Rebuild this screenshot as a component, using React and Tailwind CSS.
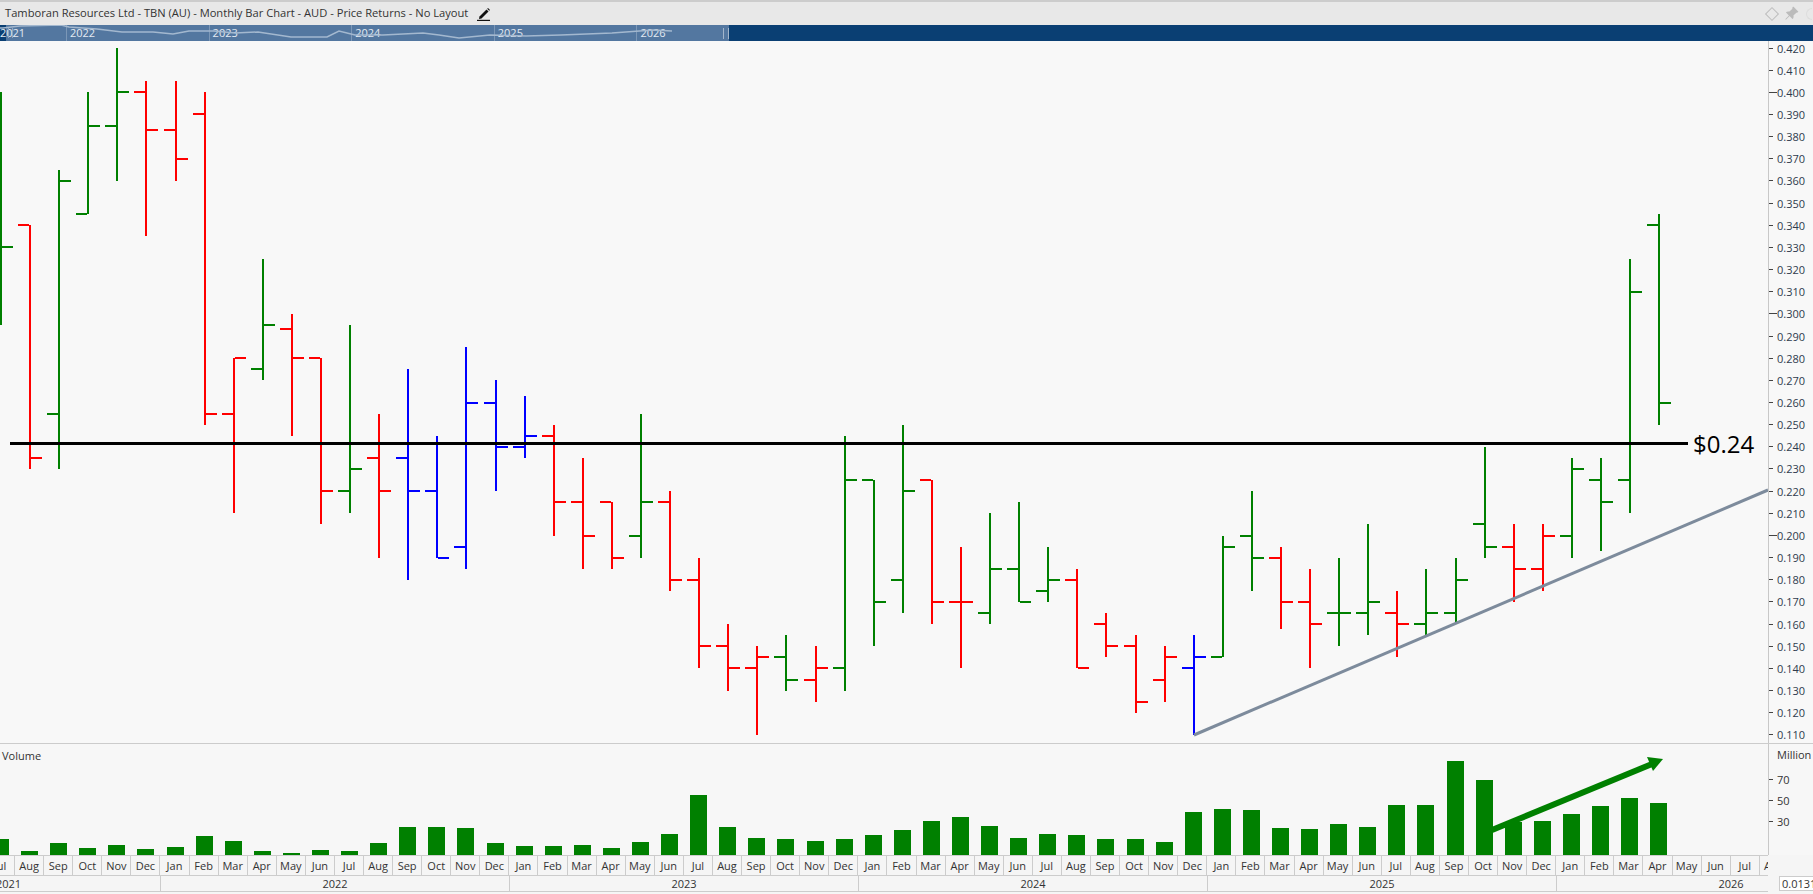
import React from "react";
import { BsPinAngleFill } from "react-icons/bs";

const UP = "#008000";
const DOWN = "#ff0000";
const NEUTRAL = "#0000ff";

// [colour, open, high, low, close], one per month from Jul 2021
const bars = [
  [UP, 0.33, 0.4, 0.295, 0.33],
  [DOWN, 0.34, 0.34, 0.23, 0.235],
  [UP, 0.255, 0.365, 0.23, 0.36],
  [UP, 0.345, 0.4, 0.345, 0.385],
  [UP, 0.385, 0.42, 0.36, 0.4],
  [DOWN, 0.4, 0.405, 0.335, 0.383],
  [DOWN, 0.383, 0.405, 0.36, 0.37],
  [DOWN, 0.39, 0.4, 0.25, 0.255],
  [DOWN, 0.255, 0.28, 0.21, 0.28],
  [UP, 0.275, 0.325, 0.27, 0.295],
  [DOWN, 0.293, 0.3, 0.245, 0.28],
  [DOWN, 0.28, 0.28, 0.205, 0.22],
  [UP, 0.22, 0.295, 0.21, 0.23],
  [DOWN, 0.235, 0.255, 0.19, 0.22],
  [NEUTRAL, 0.235, 0.275, 0.18, 0.22],
  [NEUTRAL, 0.22, 0.245, 0.19, 0.19],
  [NEUTRAL, 0.195, 0.285, 0.185, 0.26],
  [NEUTRAL, 0.26, 0.27, 0.22, 0.24],
  [NEUTRAL, 0.24, 0.263, 0.235, 0.245],
  [DOWN, 0.245, 0.25, 0.2, 0.215],
  [DOWN, 0.215, 0.235, 0.185, 0.2],
  [DOWN, 0.215, 0.215, 0.185, 0.19],
  [UP, 0.2, 0.255, 0.19, 0.215],
  [DOWN, 0.215, 0.22, 0.175, 0.18],
  [DOWN, 0.18, 0.19, 0.14, 0.15],
  [DOWN, 0.15, 0.16, 0.13, 0.14],
  [DOWN, 0.14, 0.15, 0.11, 0.145],
  [UP, 0.145, 0.155, 0.13, 0.135],
  [DOWN, 0.135, 0.15, 0.125, 0.14],
  [UP, 0.14, 0.245, 0.13, 0.225],
  [UP, 0.225, 0.225, 0.15, 0.17],
  [UP, 0.18, 0.25, 0.165, 0.22],
  [DOWN, 0.225, 0.225, 0.16, 0.17],
  [DOWN, 0.17, 0.195, 0.14, 0.17],
  [UP, 0.165, 0.21, 0.16, 0.185],
  [UP, 0.185, 0.215, 0.17, 0.17],
  [UP, 0.175, 0.195, 0.17, 0.18],
  [DOWN, 0.18, 0.185, 0.14, 0.14],
  [DOWN, 0.16, 0.165, 0.145, 0.15],
  [DOWN, 0.15, 0.155, 0.12, 0.125],
  [DOWN, 0.135, 0.15, 0.125, 0.145],
  [NEUTRAL, 0.14, 0.155, 0.11, 0.145],
  [UP, 0.145, 0.2, 0.145, 0.195],
  [UP, 0.2, 0.22, 0.175, 0.19],
  [DOWN, 0.19, 0.195, 0.158, 0.17],
  [DOWN, 0.17, 0.185, 0.14, 0.16],
  [UP, 0.165, 0.19, 0.15, 0.165],
  [UP, 0.165, 0.205, 0.155, 0.17],
  [DOWN, 0.165, 0.175, 0.145, 0.16],
  [UP, 0.16, 0.185, 0.155, 0.165],
  [UP, 0.165, 0.19, 0.16, 0.18],
  [UP, 0.205, 0.24, 0.19, 0.195],
  [DOWN, 0.195, 0.205, 0.17, 0.185],
  [DOWN, 0.185, 0.205, 0.175, 0.2],
  [UP, 0.2, 0.235, 0.19, 0.23],
  [UP, 0.225, 0.235, 0.193, 0.215],
  [UP, 0.225, 0.325, 0.21, 0.31],
  [UP, 0.34, 0.345, 0.25, 0.26],
];

const volumes = [
  16, 4, 12, 7, 10, 6, 8, 19, 14, 4, 2, 5, 4, 12, 28, 28, 27, 12, 9, 9, 10, 7, 13, 21, 60, 28, 17, 16, 14, 16,
  20, 25, 34, 38, 29, 17, 21, 20, 16, 16, 13, 43, 46, 45, 27, 26, 31, 28, 50, 50, 94, 75, 33, 34, 41, 49, 57, 52,
];

const monthNames = ["Jan", "Feb", "Mar", "Apr", "May", "Jun", "Jul", "Aug", "Sep", "Oct", "Nov", "Dec"];
const months = Array.from({ length: 62 }, (_, i) => monthNames[(i + 6) % 12]);

const priceTicks = Array.from({ length: 32 }, (_, i) => 0.42 - i * 0.01);
const years = ["2022", "2023", "2024", "2025", "2026"];

const barX = (i) => Math.round(1 + i * 29.09) - 1;
const priceY = (p) => Math.round(48 + (0.42 - p) * 2216) - 41;

const navLine =
  "0,28 3,28 20,26 61,25 69,27 97,29 122,32 153,32 173,34 189,31 214,31 235,33 258,32 291,37 327,37 339,31 355,35 383,35 423,33 439,35 459,38 490,35 526,36 561,35 612,33 653,30 672,31";

function PriceBars() {
  return (
    <svg width="1768" height="702" className="block" shapeRendering="crispEdges">
      {bars.map(([color, open, high, low, close], i) => {
        const x = barX(i);
        return (
          <g key={i} fill={color}>
            <rect x={x} y={priceY(high)} width="2" height={priceY(low) - priceY(high)} />
            <rect x={x - 11} y={priceY(open) - 1} width="11" height="2" />
            <rect x={x + 2} y={priceY(close) - 1} width="11" height="2" />
          </g>
        );
      })}
      <line x1="1194" y1="694" x2="1768" y2="449" stroke="#7d8b9c" strokeWidth="3" shapeRendering="auto" />
      <rect x="10" y="401" width="1678" height="3" fill="#000" />
    </svg>
  );
}

function VolumeBars() {
  return (
    <svg width="1768" height="111" className="block">
      {volumes.map((v, i) => (
        <rect key={i} x={barX(i) - 8} y={111 - v} width="17" height={v} fill={UP} shapeRendering="crispEdges" />
      ))}
      <line x1="1492" y1="86" x2="1652" y2="20" stroke={UP} strokeWidth="6" />
      <polygon points="1647,13 1663,15 1653,27" fill={UP} />
    </svg>
  );
}

export default function App() {
  return (
    <div
      className="w-full h-screen overflow-hidden flex flex-col bg-[#f0f0f0] text-[#333] text-[11px]"
      style={{ fontFamily: '"Open Sans", "Noto Sans", sans-serif' }}
    >
      {/* title bar */}
      <div className="h-[25px] shrink-0 border-t-2 border-[#cccccc] bg-[#e8e8e8] flex items-center pl-[5px] pr-[1px]">
        <span className="text-[11.15px] whitespace-nowrap">
          Tamboran Resources Ltd - TBN (AU) - Monthly Bar Chart - AUD - Price Returns - No Layout
        </span>
        <svg width="14" height="14" viewBox="0 0 14 14" className="ml-[9px]">
          <path d="M2.5 9.5 L9.5 2.5 L11.5 4.5 L4.5 11.5 L2 12 Z" fill="#111" />
          <path d="M10.2 1.8 L11 1 L13 3 L12.2 3.8 Z" fill="#111" />
          <rect x="0" y="12.8" width="13" height="1.2" fill="#111" />
        </svg>
        <div className="ml-auto flex items-center gap-[7px]">
          <div className="w-[10px] h-[10px] rotate-45 border-[1.5px] border-[#bdbdbd]" />
          <BsPinAngleFill className="text-[#bbbbbb] w-[15px] h-[15px]" />
          <div className="w-[6px] h-[12px] rounded-l-full border-l border-y border-[#dddddd]" />
        </div>
      </div>

      {/* navigator */}
      <div className="h-[16px] shrink-0 bg-[#0a3f73]">
        <div className="relative w-[729px] h-full bg-[#5377a0] overflow-hidden">
          <div className="absolute left-0 top-0 w-[6px] h-full bg-[#0a3f73]" />
          <div className="relative flex text-[#e3eaf2] text-[11px] leading-[16px]">
            <div className="w-[66px] shrink-0">2021</div>
            {years.map((y) => (
              <div key={y} className="w-[142.6px] shrink-0 border-l border-[#7b97b7] pl-[3px]">
                {y}
              </div>
            ))}
          </div>
          <svg width="729" height="16" className="absolute left-0 top-0" viewBox="0 25 729 16">
            <polyline points={navLine} fill="none" stroke="#a3b8cf" strokeWidth="1.5" />
          </svg>
          <div className="absolute left-[8px] top-[3px] w-[5px] h-[10px] border-x border-[#8fa5bf]" />
          <div className="absolute right-0 top-[3px] w-[6px] h-[11px] border-x border-[#a3b6cc]" />
        </div>
      </div>

      {/* price pane */}
      <div className="h-[702px] shrink-0 bg-[#f8f8f8] flex">
        <div className="relative w-[1768px] shrink-0 overflow-hidden">
          <PriceBars />
          <div className="absolute left-[1693px] top-[385px] text-[24px] leading-[36px] text-black">$0.24</div>
        </div>
        <div className="flex-1 border-l border-[#c8c8c8] overflow-hidden">
          <div className="-mt-[4.08px]">
            {priceTicks.map((p, i) => (
              <div key={i} className="h-[22.16px] flex items-center">
                <div className="w-[8px] shrink-0">
                  <div className={i % 10 === 2 ? "w-[8px] h-px bg-[#444]" : "w-[4px] h-px bg-[#444]"} />
                </div>
                <span className="text-[11px] leading-none text-[#2f3b4d]">{p.toFixed(3)}</span>
              </div>
            ))}
          </div>
        </div>
      </div>

      {/* volume pane */}
      <div className="h-[112px] shrink-0 border-t border-[#cccccc] bg-[#f7f7f7] flex">
        <div className="relative w-[1768px] shrink-0">
          <VolumeBars />
          <div className="absolute left-[2px] top-[4px] text-[11px] leading-[16px]">Volume</div>
        </div>
        <div className="flex-1 border-l border-[#c8c8c8] pt-[3px] overflow-hidden">
          <div className="pl-[8px] h-[16px] leading-[16px] whitespace-nowrap">Million</div>
          <div className="mt-[6px]">
            {["70", "50", "30"].map((v) => (
              <div key={v} className="h-[21px] flex items-center">
                <div className="w-[8px] shrink-0">
                  <div className="w-[4px] h-px bg-[#444]" />
                </div>
                <span className="leading-none">{v}</span>
              </div>
            ))}
          </div>
        </div>
      </div>

      {/* time axis */}
      <div className="h-[39px] shrink-0 flex bg-[#f5f5f5]">
        <div className="w-[1768px] shrink-0 overflow-hidden">
          <div className="h-[20px] flex border-t border-[#cccccc] -ml-[14px]">
            {months.map((m, i) => (
              <div
                key={i}
                className="w-[29.09px] shrink-0 border-r border-[#cccccc] text-center leading-[19px] text-[11px] overflow-hidden"
              >
                {m}
              </div>
            ))}
          </div>
          <div className="h-[17px] flex border-y border-[#cccccc] -ml-[4px] leading-[15px]">
            <div className="w-[165px] shrink-0 border-r border-[#cccccc]">2021</div>
            {years.map((y) => (
              <div key={y} className="w-[349px] shrink-0 border-r border-[#cccccc] text-center">
                {y}
              </div>
            ))}
          </div>
        </div>
        <div className="flex-1 pl-[11px] pt-[21px] overflow-hidden">
          <div className="h-[15px] w-[60px] border border-[#cccccc] bg-white leading-[13px] pl-[2px]">0.0131</div>
        </div>
      </div>
    </div>
  );
}
